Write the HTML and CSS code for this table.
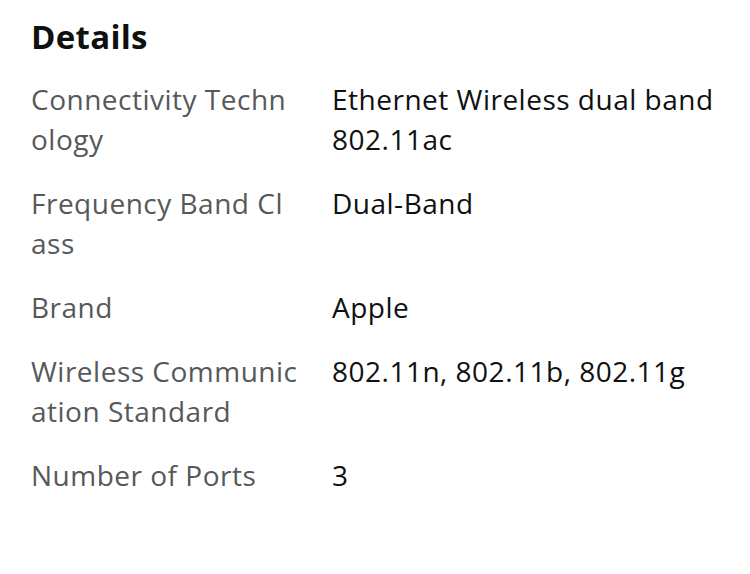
FILE: index.html
```html
<!DOCTYPE html>
<html>
<head>
<meta charset="utf-8">
<link rel="stylesheet" href="styles.css">
</head>
<body>
<div class="details">
  <h2 class="title">Details</h2>
  <div class="table">
    <div class="row"><div class="label">Connectivity Techn<wbr>ology</div><div class="value">Ethernet Wireless dual band 802.11ac</div></div>
    <div class="row"><div class="label">Frequency Band Cl<wbr>ass</div><div class="value">Dual-Band</div></div>
    <div class="row"><div class="label">Brand</div><div class="value">Apple</div></div>
    <div class="row"><div class="label">Wireless Communic<wbr>ation Standard</div><div class="value">802.11n, 802.11b, 802.11g</div></div>
    <div class="row"><div class="label">Number of Ports</div><div class="value">3</div></div>
  </div>
</div>
</body>
</html>
```

FILE: styles.css
```css
html, body {
  margin: 0;
  padding: 0;
  background: #ffffff;
}
.details {
  padding: 17px 0 0 31px;
  font-family: "Open Sans", sans-serif;
}
.title {
  margin: 0 0 22px 0;
  font-size: 33px;
  line-height: 40px;
  font-weight: 700;
  letter-spacing: 0.3px;
  color: #0f1111;
}
.table {
  display: flex;
  flex-direction: column;
  gap: 24px;
}
.row {
  display: grid;
  grid-template-columns: 290px 400px;
  column-gap: 11px;
  font-size: 28px;
  line-height: 40px;
  letter-spacing: 0.5px;
}
.label {
  color: #565959;
}
.value {
  color: #0f1111;
}
```
